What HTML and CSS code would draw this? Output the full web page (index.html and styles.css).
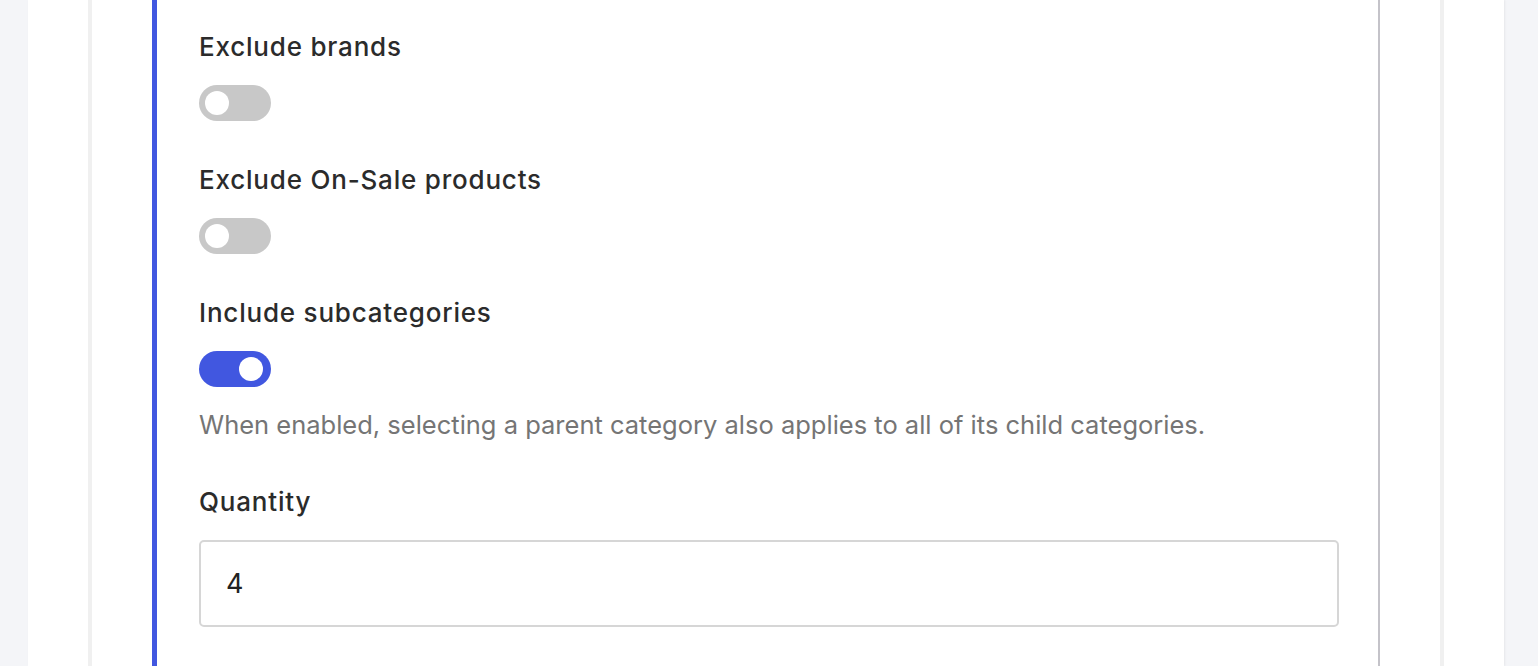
FILE: index.html
```html
<!DOCTYPE html>
<html lang="en">
<head>
  <meta charset="UTF-8" />
  <meta name="viewport" content="width=device-width, initial-scale=1" />
  <title>Rule Settings</title>
  <link rel="stylesheet" href="styles.css">
</head>
<body>
  <div class="page">
    <div class="card">
      <div class="rule">
        <div class="field">
          <label class="field-label">Exclude brands</label>
          <div class="toggle"><span class="knob"></span></div>
        </div>

        <div class="field">
          <label class="field-label">Exclude On-Sale products</label>
          <div class="toggle"><span class="knob"></span></div>
        </div>

        <div class="field">
          <label class="field-label">Include subcategories</label>
          <div class="toggle on"><span class="knob"></span></div>
          <p class="help">When enabled, selecting a parent category also applies to all of its child categories.</p>
        </div>

        <div class="field">
          <label class="field-label" for="qty">Quantity</label>
          <input type="text" id="qty" class="input" value="4" />
        </div>
      </div>
    </div>
  </div>
</body>
</html>
```

FILE: styles.css
```css
body {
  margin: 0;
  background: #f4f5f8;
  font-family: Inter, "Noto Sans", sans-serif;
  color: #2b2b2b;
  height: 666px;
  overflow: hidden;
}

.page {
  margin-left: 28px;
  width: 1416px;
  padding-left: 60px;
  min-height: 666px;
  background: #fff;
  box-shadow: 1px 0 2px rgba(0, 0, 0, 0.06);
}

.card {
  width: 1356px;
  min-height: 666px;
  border-left: 4px solid #f0f0f0;
  border-right: 4px solid #f0f0f0;
  padding-left: 60px;
  box-sizing: border-box;
}

.rule {
  width: 1228px;
  min-height: 666px;
  box-sizing: border-box;
  border-left: 5px solid #4157e0;
  border-right: 2px solid #c4c3c9;
  padding: 28px 38px 0 42px;
}

.field {
  margin-bottom: 40px;
}

.field-label {
  display: block;
  font-size: 26px;
  line-height: 38px;
  font-weight: 500;
  letter-spacing: 0.8px;
  color: #2b2b2b;
  margin-bottom: 19px;
}

.toggle {
  width: 72px;
  height: 36px;
  border-radius: 18px;
  background: #c8c8c8;
  box-sizing: border-box;
  padding: 0 6px;
  display: flex;
  align-items: center;
}

.toggle.on {
  background: #4157e0;
  justify-content: flex-end;
  padding-right: 8px;
}

.knob {
  width: 24px;
  height: 24px;
  border-radius: 50%;
  background: #fff;
}

.help {
  margin: 20px 0 0;
  font-size: 25.5px;
  line-height: 36px;
  color: #757575;
}

.input {
  display: block;
  width: 1140px;
  height: 87px;
  box-sizing: border-box;
  border: 2px solid #d6d6d6;
  border-radius: 5px;
  padding: 0 25px;
  font-family: Inter, "Noto Sans", sans-serif;
  font-size: 27px;
  color: #222;
  outline: none;
}
```
